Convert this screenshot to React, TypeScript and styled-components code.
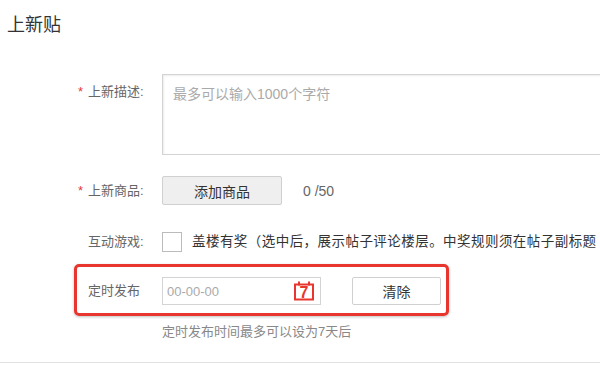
import React, { FC } from "react";
import styled, { createGlobalStyle } from "styled-components";

const GlobalStyle = createGlobalStyle`
  body {
    margin: 0;
    background: #fff;
    font-family: "Liberation Sans", "Noto Sans CJK SC", sans-serif;
  }
`;

const CalendarIcon: FC = () => (
  <svg width="22" height="20" viewBox="0 0 22 20">
    <rect x="2" y="3.5" width="18" height="15" fill="none" stroke="#e8362f" strokeWidth="2" />
    <line x1="6" y1="0.5" x2="6" y2="4.5" stroke="#e8362f" strokeWidth="2" />
    <line x1="16" y1="0.5" x2="16" y2="4.5" stroke="#e8362f" strokeWidth="2" />
    <text
      x="11"
      y="16.5"
      textAnchor="middle"
      fontSize="16"
      fontWeight="700"
      fontFamily="Liberation Sans, sans-serif"
      fill="#e8362f"
    >
      7
    </text>
  </svg>
);

const App: FC = () => {
  return (
    <Page>
      <GlobalStyle />
      <Title>上新贴</Title>
      <Form>
        <Row $top>
          <Label $pad>
            <Star>*</Star>上新描述:
          </Label>
          <TextArea placeholder="最多可以输入1000个字符" />
        </Row>
        <Row $gap={21}>
          <Label>
            <Star>*</Star>上新商品:
          </Label>
          <GreyButton>添加商品</GreyButton>
          <Counter>0 /50</Counter>
        </Row>
        <Row $gap={27}>
          <Label>互动游戏:</Label>
          <CheckBox type="checkbox" />
          <CheckText>盖楼有奖（选中后，展示帖子评论楼层。中奖规则须在帖子副标题</CheckText>
        </Row>
        <Row $gap={12} $highlight>
          <Label>定时发布</Label>
          <DateBox>
            <DateInput placeholder="00-00-00" />
            <CalendarIcon />
          </DateBox>
          <WhiteButton>清除</WhiteButton>
        </Row>
        <Hint>定时发布时间最多可以设为7天后</Hint>
      </Form>
      <Divider />
    </Page>
  );
};

const Page = styled.div`
  width: 600px;
  height: 368px;
  overflow: hidden;
`;

const Title = styled.div`
  height: 48px;
  line-height: 50px;
  padding-left: 7px;
  font-size: 18px;
  color: #333;
`;

const Form = styled.div`
  padding: 26px 0 0 74px;
`;

const Row = styled.div<{ $top?: boolean; $gap?: number; $highlight?: boolean }>`
  display: flex;
  align-items: ${(p) => (p.$top ? "flex-start" : "center")};
  margin-top: ${(p) => p.$gap || 0}px;
  width: ${(p) => (p.$highlight ? "353px" : "auto")};
  padding: ${(p) => (p.$highlight ? "10px 5px 8px 11px" : "0 0 0 14px")};
  border: ${(p) => (p.$highlight ? "3px solid #e8362f" : "none")};
  border-radius: ${(p) => (p.$highlight ? "5px" : "0")};
  box-shadow: ${(p) => (p.$highlight ? "0 1px 3px rgba(0, 0, 0, 0.25)" : "none")};
`;

const Label = styled.div<{ $pad?: boolean }>`
  flex: 0 0 74px;
  padding-top: ${(p) => (p.$pad ? "9px" : "0")};
  font-size: 13px;
  line-height: 18px;
  color: #666;
`;

const Star = styled.span`
  display: inline-block;
  width: 10px;
  margin-left: -10px;
  color: #e4393c;
  font-size: 13px;
`;

const TextArea = styled.textarea`
  box-sizing: border-box;
  width: 480px;
  height: 81px;
  flex-shrink: 0;
  padding: 9px 10px;
  border: 1px solid #d4d4d4;
  box-shadow: inset 1px 1px 2px rgba(0, 0, 0, 0.08);
  resize: none;
  font-family: inherit;
  font-size: 14px;
  line-height: 20px;
  outline: none;

  &::placeholder {
    color: #aaa;
  }
`;

const GreyButton = styled.button`
  box-sizing: border-box;
  width: 120px;
  height: 29px;
  padding: 0;
  background: #efefef;
  border: 1px solid #d0d0d0;
  border-radius: 2px;
  font-family: inherit;
  font-size: 14px;
  color: #333;
`;

const Counter = styled.span`
  margin-left: 21px;
  font-size: 14px;
  color: #666;
`;

const CheckBox = styled.input`
  appearance: none;
  box-sizing: border-box;
  width: 20px;
  height: 20px;
  margin: 0;
  flex-shrink: 0;
  border: 1px solid #bbb;
  background: #fff;
`;

const CheckText = styled.span`
  margin-left: 10px;
  font-size: 13.5px;
  line-height: 20px;
  letter-spacing: 0.45px;
  color: #333;
  white-space: nowrap;
`;

const DateBox = styled.div`
  box-sizing: border-box;
  display: flex;
  align-items: center;
  width: 159px;
  height: 28px;
  padding: 0 5px 0 4px;
  border: 1px solid #d4d4d4;
  background: #fff;
`;

const DateInput = styled.input`
  flex: 1;
  min-width: 0;
  border: none;
  outline: none;
  padding: 0;
  font-family: inherit;
  font-size: 13px;
  color: #333;

  &::placeholder {
    color: #aaa;
  }
`;

const WhiteButton = styled.button`
  box-sizing: border-box;
  width: 89px;
  height: 28px;
  margin-left: 31px;
  padding: 0;
  background: #fff;
  border: 1px solid #d0d0d0;
  border-radius: 2px;
  font-family: inherit;
  font-size: 14px;
  color: #333;
`;

const Hint = styled.div`
  margin-top: 7px;
  padding-left: 88px;
  font-size: 13px;
  line-height: 18px;
  color: #888;
`;

const Divider = styled.div`
  margin-top: 21px;
  height: 1px;
  background: #e2e2e2;
`;

export default App;
